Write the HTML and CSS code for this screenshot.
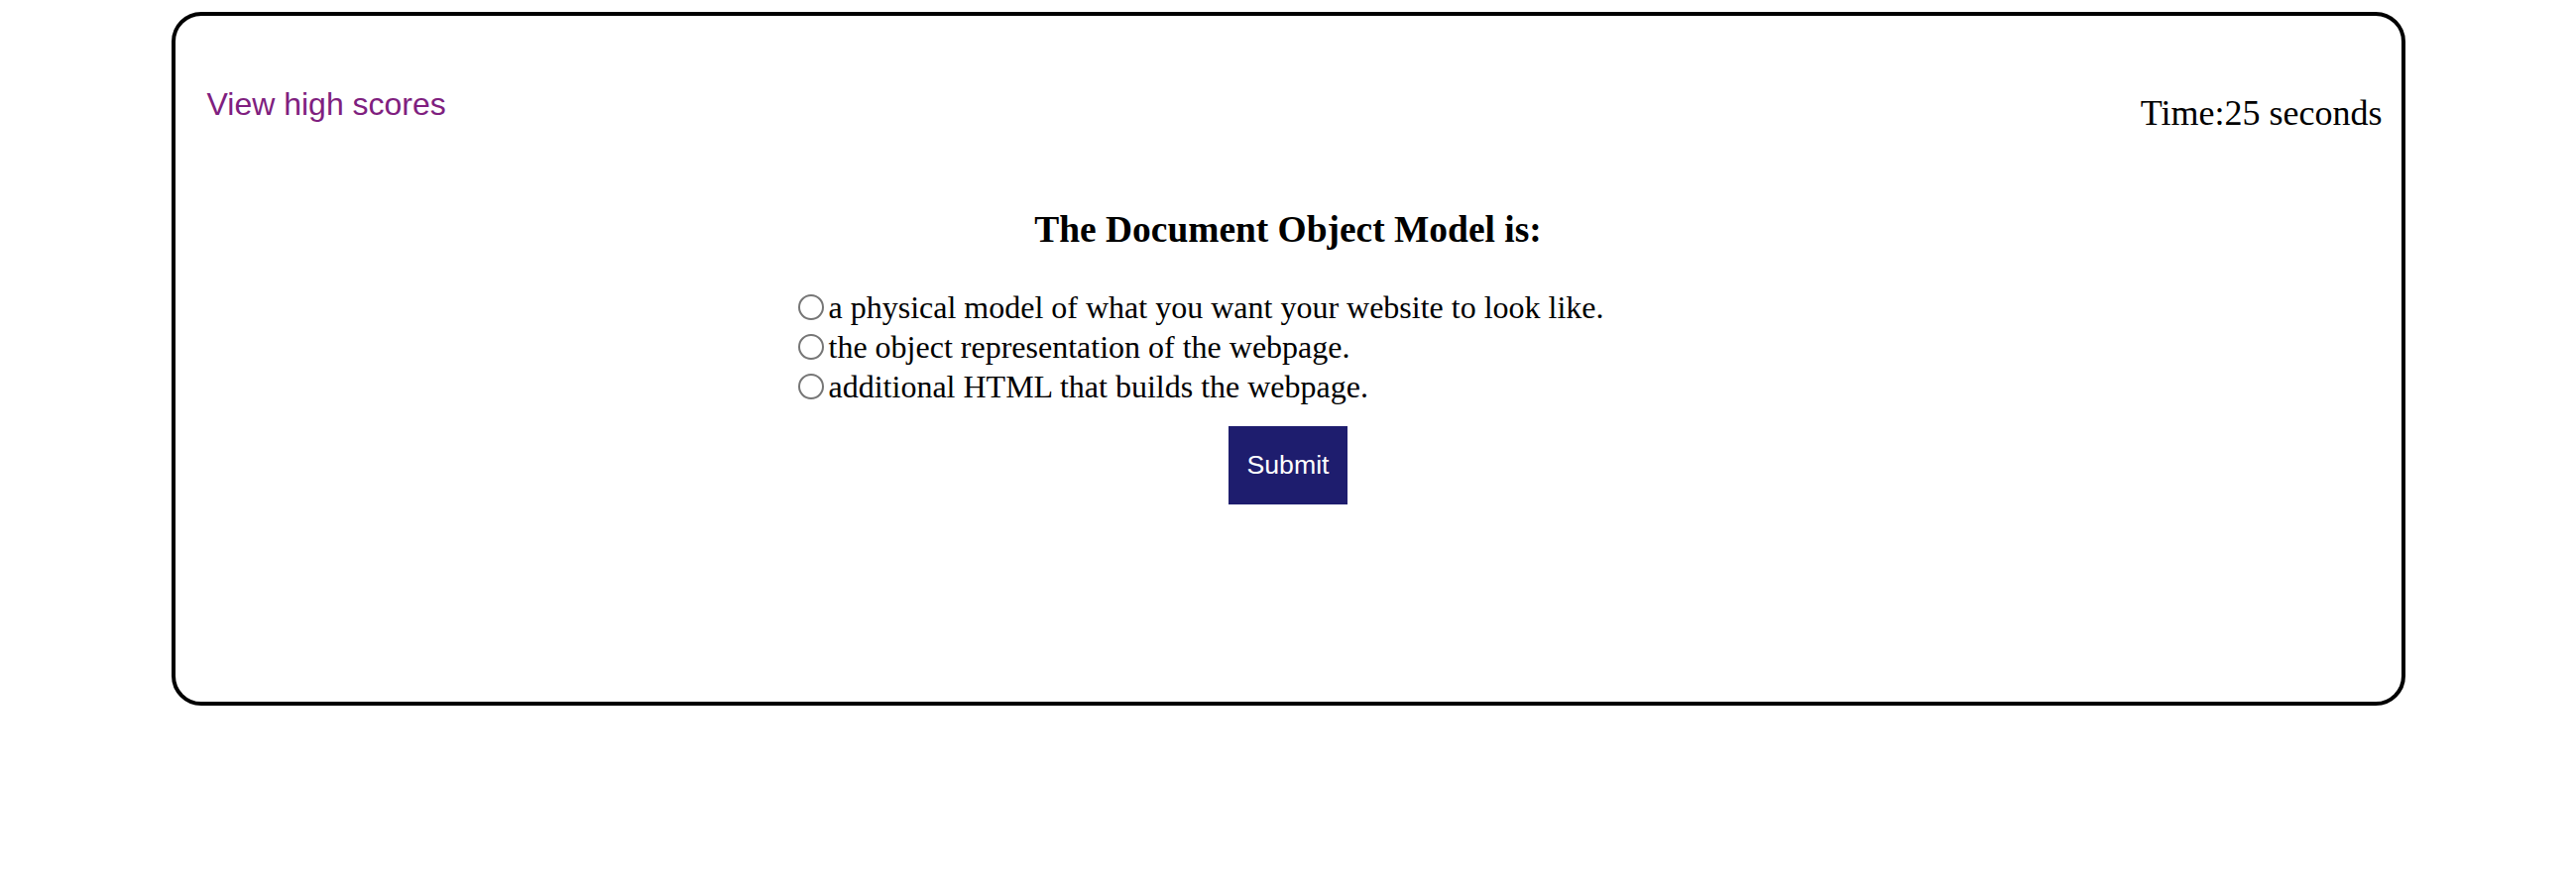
FILE: index.html
```html
<!DOCTYPE html>
<html lang="en">
<head>
<meta charset="utf-8">
<title>Quiz</title>
<link rel="stylesheet" href="styles.css">
</head>
<body>
  <main class="quiz">
    <header class="topbar">
      <a class="scores-link" href="#">View high scores</a>
      <div class="timer">Time:25 seconds</div>
    </header>
    <h3 class="question">The Document Object Model is:</h3>
    <form class="options">
      <label class="option"><input type="radio" name="answer" class="radio">a physical model of what you want your website to look like.</label>
      <label class="option"><input type="radio" name="answer" class="radio">the object representation of the webpage.</label>
      <label class="option"><input type="radio" name="answer" class="radio">additional HTML that builds the webpage.</label>
    </form>
    <div class="actions">
      <button class="submit" type="button">Submit</button>
    </div>
  </main>
</body>
</html>
```

FILE: styles.css
```css
html, body {
  margin: 0;
  padding: 0;
  background: #ffffff;
}

body {
  font-family: "Liberation Serif", "Times New Roman", serif;
  font-size: 32px;
  color: #000000;
}

.quiz {
  box-sizing: border-box;
  width: 2253px;
  height: 700px;
  margin: 12px auto 0;
  border: 4px solid #000000;
  border-radius: 30px;
  padding: 0 19px 0 32px;
  display: flex;
  flex-direction: column;
}

.topbar {
  display: flex;
  justify-content: space-between;
  align-items: flex-start;
}

.scores-link {
  margin-top: 71px;
  font-family: "Liberation Sans", Arial, sans-serif;
  font-size: 32px;
  line-height: 37px;
  color: #801f80;
  text-decoration: none;
}

.timer {
  margin-top: 78px;
  font-size: 36px;
  line-height: 41px;
}

.question {
  margin: 75px 0 0 -13px;
  text-align: center;
  font-size: 37.44px;
  line-height: 43px;
  font-weight: bold;
}

.options {
  width: 1009px;
  margin: 37px 0 0 586px;
  display: flex;
  flex-direction: column;
}

.option {
  display: flex;
  align-items: center;
  height: 40px;
  line-height: 40px;
  white-space: nowrap;
}

.radio {
  appearance: none;
  -webkit-appearance: none;
  box-sizing: border-box;
  width: 26px;
  height: 26px;
  margin: 0 5px 0 10px;
  border: 2px solid #767676;
  border-radius: 50%;
  background: #ffffff;
  flex: none;
}

.actions {
  display: flex;
  justify-content: center;
  margin-top: 20px;
  margin-left: -13px;
}

.submit {
  height: 79px;
  width: 120px;
  padding: 0;
  border: none;
  background: #1e1d6e;
  color: #ffffff;
  font-family: "Liberation Sans", Arial, sans-serif;
  font-size: 26.67px;
}
```
